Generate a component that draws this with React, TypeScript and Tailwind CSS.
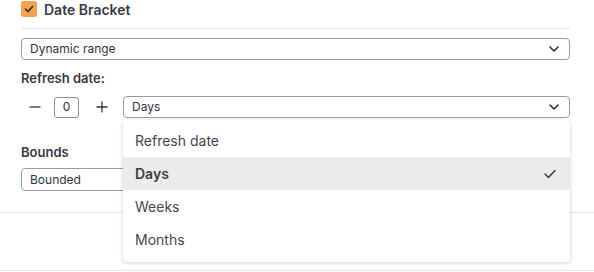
import React from "react";

const Chevron = () => (
  <svg width="10" height="6" viewBox="0 0 10 6" fill="none" className="shrink-0">
    <path d="M1 1l4 4 4-4" stroke="#2e2e3a" strokeWidth="1.6" strokeLinecap="round" strokeLinejoin="round" />
  </svg>
);

function Select({ label, className = "" }: { label: string; className?: string }) {
  return (
    <div
      className={`flex h-[22px] items-center justify-between rounded-[4px] border border-[#9b9b9f] bg-white pl-[8px] pr-[10px] text-[12px] text-[#34343f] ${className}`}
    >
      <span>{label}</span>
      <Chevron />
    </div>
  );
}

export default function App() {
  return (
    <div
      className="relative h-[272px] w-[594px] overflow-hidden bg-white text-[#34343f]"
      style={{ fontFamily: "Inter, 'Noto Sans', sans-serif" }}
    >
      <div className="pl-[21px] pr-[24px] pt-[1px]">
        <div className="flex h-[16px] items-center gap-[7px]">
          <div className="flex h-[16px] w-[16px] items-center justify-center rounded-[3px] bg-[#f0a24e]">
            <svg width="10" height="8" viewBox="0 0 10 8" fill="none">
              <path d="M1.5 4l2.5 2.5L8.5 1.5" stroke="#3a2a1a" strokeWidth="1.6" strokeLinecap="round" strokeLinejoin="round" />
            </svg>
          </div>
          <span className="text-[14px] font-semibold text-[#3a3a46]">Date Bracket</span>
        </div>
        <div className="mt-[11px] h-px bg-[#e4e4e8]" />
        <Select label="Dynamic range" className="mt-[9px]" />
        <div className="mt-[10px] h-[16px] text-[13px] font-semibold leading-[16px] text-[#3a3a46]">Refresh date:</div>
        <div className="mt-[10px] flex h-[22px] items-center">
          <svg width="12" height="12" viewBox="0 0 12 12" className="ml-[8px]">
            <path d="M0.5 6h11" stroke="#34343f" strokeWidth="1.3" />
          </svg>
          <div className="ml-[13px] flex h-[21px] w-[25px] items-center justify-center rounded-[3px] border border-[#8e8e92] text-[12px]">
            0
          </div>
          <svg width="12" height="12" viewBox="0 0 12 12" className="ml-[17px]">
            <path d="M0.5 6h11M6 0.5v11" stroke="#34343f" strokeWidth="1.3" />
          </svg>
          <Select label="Days" className="ml-[15px] flex-1" />
        </div>
        <div className="mt-[26px] h-[16px] text-[13px] font-semibold leading-[16px] text-[#3a3a46]">Bounds</div>
        <Select label="Bounded" className="mt-[8px] h-[23px] w-[300px]" />
      </div>
      <div className="mt-[21px] h-px bg-[#e4e4e8]" />
      <div className="mt-[57px] h-px bg-[#e4e4e8]" />

      <div className="absolute left-[123px] top-[120px] w-[447px] rounded-[4px] bg-white pb-[6px] pt-[4px] shadow-[0_1px_4px_rgba(0,0,0,0.18)]">
        {["Refresh date", "Days", "Weeks", "Months"].map((it) => {
          const sel = it === "Days";
          return (
            <div
              key={it}
              className={`flex h-[33px] items-center justify-between pl-[12px] pr-[14px] text-[14px] ${
                sel ? "bg-[#ebebeb] font-semibold text-[#3a3a46]" : "text-[#45454f]"
              }`}
            >
              <span>{it}</span>
              {sel && (
                <svg width="12" height="10" viewBox="0 0 12 10" fill="none">
                  <path d="M1 5l3.5 3.5L11 1.5" stroke="#34343f" strokeWidth="1.4" strokeLinecap="round" strokeLinejoin="round" />
                </svg>
              )}
            </div>
          );
        })}
      </div>
    </div>
  );
}
